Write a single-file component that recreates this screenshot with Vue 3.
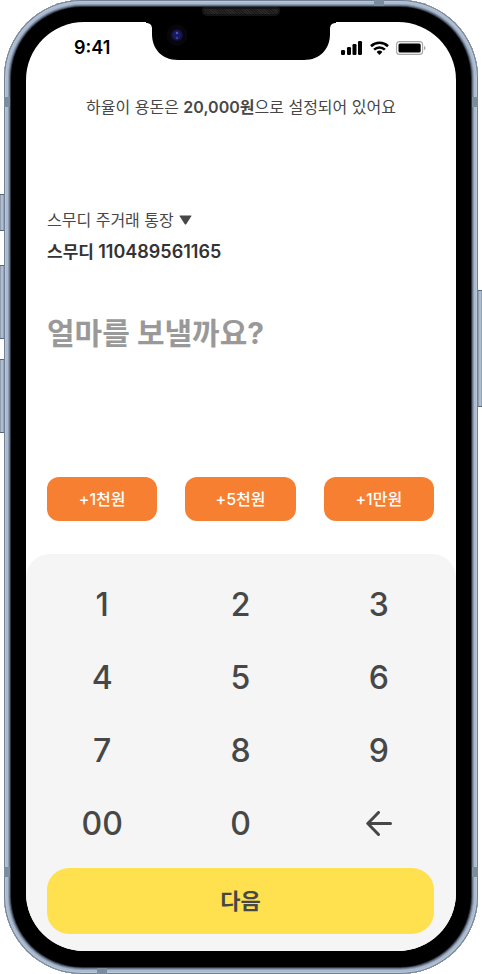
<script setup>
import { ref, computed } from 'vue'

const amount = ref('')
const presets = [
  { label: '+1천원', value: 1000 },
  { label: '+5천원', value: 5000 },
  { label: '+1만원', value: 10000 },
]
const keys = ['1', '2', '3', '4', '5', '6', '7', '8', '9', '00', '0']

const display = computed(() =>
  amount.value ? `${Number(amount.value).toLocaleString()}원` : '얼마를 보낼까요?'
)
function press(key) {
  amount.value = String(Number(amount.value + key) || '').slice(0, 9)
}
function add(value) {
  amount.value = String(Number(amount.value) + value)
}
function erase() {
  amount.value = amount.value.slice(0, -1)
}
</script>

<template>
  <div class="stage">
    <div class="phone">
      <i class="side mute"></i>
      <i class="side volume-up"></i>
      <i class="side volume-down"></i>
      <i class="side power"></i>
      <i class="band band-left band-upper"></i>
      <i class="band band-right band-upper"></i>
      <i class="band band-left band-lower"></i>
      <i class="band band-right band-lower"></i>
      <i class="band band-top"></i>
      <i class="band band-bottom"></i>
      <i class="speaker"></i>

      <main class="screen">
        <svg class="notch" viewBox="0 0 190 38" aria-hidden="true">
          <path d="M0 0H190V1C186 1 184 3 184 7V12C184 27 174 38 158 38H32C16 38 6 27 6 12V7C6 3 4 1 0 1Z" fill="#000" />
          <circle cx="31" cy="13" r="10.500" fill="#08060b" />
          <circle cx="31" cy="13" r="6" fill="#10103a" />
          <circle cx="31" cy="13" r="4.500" fill="#19195e" />
          <circle cx="31" cy="11" r="1.200" fill="#5057bd" />
          <circle cx="31" cy="16" r="1.200" fill="#2c4a9c" />
        </svg>

        <header class="status">
          <time class="clock">9:41</time>
          <div class="indicators">
            <svg width="22" height="14" viewBox="0 0 22 14" aria-hidden="true">
              <rect x="0" y="9" width="4" height="5" rx="1.2" />
              <rect x="6" y="6" width="4" height="8" rx="1.2" />
              <rect x="11.500" y="3" width="4" height="11" rx="1.2" />
              <rect x="17" y="0" width="4" height="14" rx="1.2" />
            </svg>
            <svg width="19" height="14" viewBox="0 0 19 14" aria-hidden="true">
              <g fill="none" stroke="#000" stroke-width="2.6">
                <path d="M1 5.200A12.300 12.300 0 0 1 18 5.200" />
                <path d="M4.100 8.600A7.800 7.800 0 0 1 14.900 8.600" />
              </g>
              <path d="M6.600 10.900A4.200 4.200 0 0 1 12.400 10.900L9.500 13.900Z" />
            </svg>
            <svg width="30" height="14" viewBox="0 0 30 14" aria-hidden="true">
              <rect x=".6" y=".6" width="26" height="12.800" rx="3" fill="none" stroke="#a6a6a6" stroke-width="1.100" />
              <rect x="2.500" y="2.500" width="22.200" height="9" rx="1.500" />
              <path d="M28 5Q29.600 5.600 29.600 7T28 9Z" fill="#a6a6a6" />
            </svg>
          </div>
        </header>

        <p class="notice">하율이 용돈은 <strong>20,000원</strong>으로 설정되어 있어요</p>

        <section class="account">
          <button class="account-picker" type="button">
            스무디 주거래 통장
            <svg width="13" height="10" viewBox="0 0 13 10" aria-hidden="true">
              <path d="M1 .5H12Q12.800.5 12.300 1.300L7.200 9.200Q6.500 10 5.800 9.200L.7 1.300Q.2.500 1 .5Z" />
            </svg>
          </button>
          <p class="account-number">스무디 <span>110489561165</span></p>
          <output class="amount">{{ display }}</output>
        </section>

        <div class="presets">
          <button v-for="p in presets" :key="p.value" type="button" @click="add(p.value)">{{ p.label }}</button>
        </div>

        <section class="pad">
          <div class="keys">
            <button v-for="k in keys" :key="k" type="button" @click="press(k)">{{ k }}</button>
            <button type="button" aria-label="지우기" @click="erase">
              <svg width="26" height="26" viewBox="0 0 26 26" aria-hidden="true">
                <path d="M12.500 1.500L1.800 12.500L12.500 23.500M2 12.500H24.500" />
              </svg>
            </button>
          </div>
          <button class="next" type="button">다음</button>
        </section>
      </main>
    </div>
  </div>
</template>

<style>
body {
  margin: 0;
  background: #fff;
}
</style>

<style scoped>
.stage {
  padding: 0 4px;
  font-family: Inter, "Noto Sans CJK KR", sans-serif;
  color: #474747;
}
.phone {
  position: relative;
  padding: 22px 22px 23px;
  border-radius: 78px;
  background: #000;
  box-shadow:
    inset 0 0 0 1px #718096,
    inset 0 0 0 2px #b9c6d6,
    inset 0 0 0 4px #acbacd,
    inset 0 0 0 5px #8c9cb2,
    inset 0 0 0 6px #65748a,
    inset 0 0 0 7px #303641;
}
.side {
  position: absolute;
  box-sizing: border-box;
  width: 4px;
  background: linear-gradient(90deg, #8190a3, #bdcada 50%, #8796aa);
  border: solid #57677c;
  border-width: 1px 0;
}
.mute {
  left: -4px;
  top: 194px;
  height: 37px;
}
.volume-up {
  left: -4px;
  top: 265px;
  height: 74px;
}
.volume-down {
  left: -4px;
  top: 359px;
  height: 74px;
}
.power {
  right: -4px;
  top: 290px;
  height: 117px;
}
.band {
  position: absolute;
  width: 6px;
  height: 10px;
  background: #7b8c9f;
}
.band-left {
  left: 0;
}
.band-right {
  right: 0;
}
.band-upper {
  top: 97px;
}
.band-lower {
  bottom: 97px;
}
.band-top,
.band-bottom {
  width: 10px;
  height: 6px;
}
.band-top {
  top: 0;
  right: 94px;
}
.band-bottom {
  bottom: 0;
  left: 93px;
}
.speaker {
  position: absolute;
  box-sizing: border-box;
  top: 7px;
  left: 50%;
  width: 78px;
  height: 9px;
  margin-left: -39px;
  border: 2px solid #141414;
  border-radius: 2px 2px 5px 5px;
  background: repeating-linear-gradient(45deg, #1a1a1a 0 1px, #2a2a2a 1px 2px);
}
.screen {
  position: relative;
  display: flex;
  flex-direction: column;
  overflow: hidden;
  border-radius: 58px;
  background: #fff;
}
.notch {
  position: absolute;
  top: 0;
  left: 50%;
  width: 190px;
  margin-left: -95px;
}
.status {
  display: flex;
  justify-content: space-between;
  align-items: center;
  height: 24px;
  padding: 14px 30px 0 48px;
  color: #000;
}
.clock {
  font-size: 18px;
  line-height: 24px;
  font-weight: 600;
}
.indicators {
  display: flex;
  align-items: center;
  gap: 7px;
}
p {
  margin: 0;
}
button {
  margin: 0;
  padding: 0;
  border: 0;
  background: none;
  font: inherit;
  color: inherit;
  cursor: pointer;
}
.notice {
  margin-top: 35px;
  font-size: 16px;
  line-height: 24px;
  text-align: center;
}
.notice strong {
  font-weight: 600;
}
.account {
  display: flex;
  flex-direction: column;
  align-items: flex-start;
  padding: 89px 21px 0;
}
.account-picker {
  display: flex;
  align-items: center;
  gap: 5px;
  font-size: 16px;
  line-height: 24px;
}
.account-picker svg {
  fill: #474747;
}
.account-number {
  margin-top: 8px;
  font-size: 17px;
  line-height: 24px;
  font-weight: 600;
  color: #333;
}
.account-number span {
  font-size: 18px;
}
.amount {
  margin-top: 49px;
  font-size: 30px;
  line-height: 40px;
  font-weight: 700;
  color: #999;
}
.presets {
  display: grid;
  grid-template-columns: repeat(3, 1fr);
  gap: 28px;
  padding: 124px 22px 0 21px;
}
.presets button {
  height: 44px;
  border-radius: 12px;
  background: #f77f32;
  color: #fff;
  font-size: 16px;
  line-height: 24px;
  font-weight: 500;
}
.pad {
  margin-top: 33px;
  padding: 14px 22px 17px 21px;
  border-radius: 24px 24px 0 0;
  background: #f5f5f5;
}
.keys {
  display: grid;
  grid-template-columns: repeat(3, 1fr);
  grid-auto-rows: 73px;
  column-gap: 28px;
}
.keys button {
  display: flex;
  align-items: center;
  justify-content: center;
  font-size: 32px;
  line-height: 40px;
  font-weight: 500;
}
.keys svg {
  fill: none;
  stroke: #474747;
  stroke-width: 3;
  stroke-linecap: round;
  stroke-linejoin: round;
}
.next {
  display: block;
  width: 100%;
  height: 66px;
  margin-top: 8px;
  border-radius: 22px;
  background: #ffe04f;
  font-size: 22px;
  line-height: 32px;
  font-weight: 700;
}
</style>
